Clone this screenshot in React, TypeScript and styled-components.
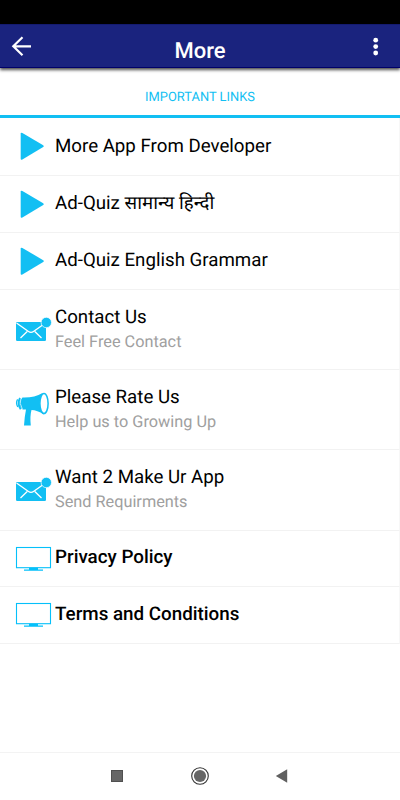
import React from "react";
import styled, { createGlobalStyle } from "styled-components";

const CYAN = "#12bff3";

const GlobalStyle = createGlobalStyle`
  * { box-sizing: border-box; }
  body { margin: 0; background: #fff; font-family: Roboto, "Noto Sans", sans-serif; text-rendering: geometricPrecision; }
`;

const Screen = styled.div`
  width: 400px;
  height: 800px;
  display: flex;
  flex-direction: column;
  overflow: hidden;
  background: #fff;
`;

const StatusBar = styled.div`
  height: 24px;
  flex: none;
  background: #000;
`;

const Header = styled.header`
  height: 44px;
  flex: none;
  display: grid;
  grid-template-columns: 48px 1fr 48px;
  background: #1a237e;
  border-top: 1px solid #141b70;
  border-bottom: 1px solid #00006a;
  box-shadow: 0 2px 3px rgba(0, 0, 0, 0.7);
`;

const HeaderButton = styled.button`
  padding: 0;
  border: 0;
  background: none;
  display: flex;

  svg { display: block; }
`;

const Title = styled.h1`
  margin: 0;
  padding-top: 5px;
  text-align: center;
  font-size: 22px;
  line-height: 43px;
  font-weight: 500;
  color: #fff;
`;

const Tab = styled.div`
  height: 50px;
  flex: none;
  padding-top: 10px;
  border-bottom: 3px solid ${CYAN};
  text-align: center;
  font-size: 12.9px;
  line-height: 36px;
  line-height: 40px;
  color: ${CYAN};
`;

const List = styled.main`
  flex: 1;
  display: flex;
  flex-direction: column;
`;

const Row = styled.div<{ $height: number }>`
  height: ${(p) => p.$height}px;
  flex: none;
  display: flex;
  align-items: flex-start;
  border-bottom: 1px solid #f2f2f2;
  border-right: 1px solid #f7f7f7;
`;

const IconSlot = styled.div`
  width: 55px;
  height: 100%;
  flex: none;

  svg { display: block; }
`;

const Texts = styled.div<{ $top: number }>`
  padding-top: ${(p) => p.$top}px;
  white-space: nowrap;
`;

const Label = styled.div<{ $bold?: boolean }>`
  font-size: ${(p) => (p.$bold ? 18.8 : 18.7)}px;
  line-height: 24px;
  font-weight: ${(p) => (p.$bold ? 500 : 400)};
  color: #000;
`;

const Note = styled.div`
  padding-top: 1px;
  font-size: 16.3px;
  line-height: 24px;
  color: #a0a0a0;
`;

const NavBar = styled.nav`
  height: 48px;
  flex: none;
  border-top: 1px solid #f3f3f3;
  display: flex;
  justify-content: center;
  gap: 58px;
  padding-top: 11px;
`;

const PlayIcon = () => (
  <svg width="55" height="56" viewBox="0 0 55 56">
    <path d="M22.4 14.9 L43.2 27.2 Q44.6 28.1 43.2 29 L22.4 41.6 Q20.7 42.2 20.7 40.8 V15.6 Q20.7 14.2 22.4 14.9Z" fill={CYAN} />
  </svg>
);

const MailIcon = () => (
  <svg width="55" height="79" viewBox="0 0 55 79">
    <rect x="16" y="32" width="30" height="19" rx="1.2" fill={CYAN} />
    <path d="M16.5 33 L28.5 41.5 Q31 43.3 33.5 41.5 L45.5 33 M20.5 48 L27.2 41.5 M41.5 48 L34.8 41.5" fill="none" stroke="#fff" strokeWidth="1.3" />
    <circle cx="46.3" cy="32.5" r="5.2" fill={CYAN} stroke="#fff" strokeWidth="0.7" />
  </svg>
);

const MegaphoneIcon = () => (
  <svg width="55" height="79" viewBox="0 0 55 79">
    <path d="M22.5 27.5 Q34 28 42.5 23 L44 44.5 Q37 40 31.5 40 Q29.8 46 30.8 55.5 H24 Q24.5 47 26 39.6 L22.5 39.5 Q16.5 33.5 22.5 27.5Z" fill={CYAN} />
    <ellipse cx="44" cy="33.5" rx="4.1" ry="10.1" fill="#fff" stroke={CYAN} strokeWidth="1.5" />
    <path d="M21 27.5 Q18.8 33.5 22.5 39.5" fill="none" stroke="#fff" strokeWidth="0.7" />
    <path d="M20 28 Q17 33.5 20.7 39.3" fill="none" stroke={CYAN} strokeWidth="1.9" />
    <path d="M17.6 29.4 Q15.4 33 17.8 37" fill="none" stroke={CYAN} strokeWidth="1.3" />
  </svg>
);

const MonitorIcon = () => (
  <svg width="55" height="56" viewBox="0 0 55 56">
    <rect x="16.5" y="16.5" width="34" height="20.2" fill="#fff" stroke="#05c0fa" strokeWidth="1.1" />
    <path d="M29 36.8h9v1.8h5v1.2H24v-1.2h5z" fill="#05c0fa" />
  </svg>
);

type Item = {
  label: string;
  note?: string;
  height: number;
  top: number;
  bold?: boolean;
  Icon: React.ComponentType;
};

const items: Item[] = [
  { label: "More App From Developer", height: 58, top: 16, Icon: PlayIcon },
  { label: "Ad-Quiz सामान्य हिन्दी", height: 57, top: 15, Icon: PlayIcon },
  { label: "Ad-Quiz English Grammar", height: 57, top: 15, Icon: PlayIcon },
  { label: "Contact Us", note: "Feel Free Contact", height: 80, top: 15, Icon: MailIcon },
  { label: "Please Rate Us", note: "Help us to Growing Up", height: 80, top: 15, Icon: MegaphoneIcon },
  { label: "Want 2 Make Ur App", note: "Send Requirments", height: 81, top: 15, Icon: MailIcon },
  { label: "Privacy Policy", height: 56, top: 14, bold: true, Icon: MonitorIcon },
  { label: "Terms and Conditions", height: 57, top: 15, bold: true, Icon: MonitorIcon },
];

export default function App() {
  return (
    <>
      <GlobalStyle />
      <Screen>
        <StatusBar />
        <Header>
          <HeaderButton aria-label="Back">
            <svg width="48" height="42" viewBox="0 0 48 42">
              <path d="M31 21.3H13.5M22.5 12.3L13.3 21.3L22.5 30.3" fill="none" stroke="#fff" strokeWidth="2.2" />
            </svg>
          </HeaderButton>
          <Title>More</Title>
          <HeaderButton aria-label="Menu">
            <svg width="48" height="42" viewBox="0 0 48 42" fill="#fff">
              <circle cx="23.7" cy="15.2" r="2.4" />
              <circle cx="23.7" cy="21.6" r="2.4" />
              <circle cx="23.7" cy="28" r="2.4" />
            </svg>
          </HeaderButton>
        </Header>
        <Tab>IMPORTANT LINKS</Tab>
        <List>
          {items.map(({ label, note, height, top, bold, Icon }) => (
            <Row key={label} $height={height}>
              <IconSlot><Icon /></IconSlot>
              <Texts $top={top}>
                <Label $bold={bold}>{label}</Label>
                {note && <Note>{note}</Note>}
              </Texts>
            </Row>
          ))}
        </List>
        <NavBar>
          <svg width="24" height="24" viewBox="0 0 24 24">
            <rect x="5.5" y="6.5" width="11" height="11" fill="#666" stroke="#505050" strokeWidth="1" />
          </svg>
          <svg width="24" height="24" viewBox="0 0 24 24">
            <circle cx="12" cy="12" r="8.3" fill="#fff" stroke="#333" strokeWidth="1.1" />
            <circle cx="12" cy="12" r="6.1" fill="#666" />
          </svg>
          <svg width="24" height="24" viewBox="0 0 24 24">
            <path d="M17.2 5.3V18.7L5.8 12Z" fill="#606060" />
          </svg>
        </NavBar>
      </Screen>
    </>
  );
}
